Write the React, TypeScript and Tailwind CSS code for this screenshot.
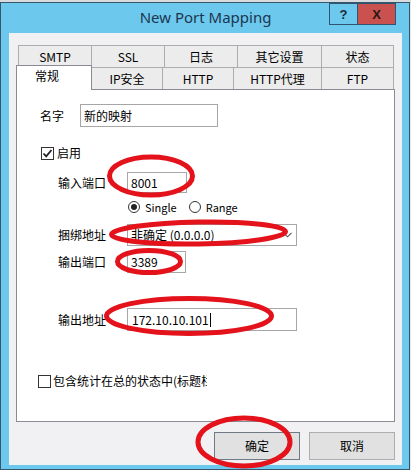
import React from "react";

const font = { fontFamily: "'Noto Sans CJK SC', 'Noto Sans', sans-serif" };

function Tab({ label, w, first }: { label: string; w: string; first?: boolean }) {
  return (
    <div
      className={`${w} h-[22px] bg-[#ececec] border-t border-r border-[#adadad] ${first ? "border-l" : ""} flex items-center justify-center text-[12px] text-black leading-none`}
    >
      {label}
    </div>
  );
}

function Check({ checked }: { checked?: boolean }) {
  return (
    <div className="w-[13px] h-[13px] border border-[#333] bg-white flex items-center justify-center shrink-0">
      {checked && (
        <svg width="11" height="11" viewBox="0 0 11 11">
          <polyline points="1.5,5.5 4.2,8.3 9.5,2" fill="none" stroke="#222" strokeWidth="1.8" />
        </svg>
      )}
    </div>
  );
}

function Radio({ checked }: { checked?: boolean }) {
  return (
    <div className="w-[12px] h-[12px] rounded-full border border-[#333] bg-white flex items-center justify-center shrink-0">
      {checked && <div className="w-[6px] h-[6px] rounded-full bg-[#222]" />}
    </div>
  );
}

export default function App() {
  return (
    <div className="relative w-[411px] h-[470px] overflow-hidden bg-[#e6e8ea]" style={font}>
      <div className="h-[2px] bg-[#d8dcdf]" />
      <div className="w-[410px] h-[468px] border border-[#35566c] bg-[#6cc8ec] flex flex-col pl-[8px] pr-[7px] pb-[4px]">
        {/* title bar */}
        <div className="h-[30px] grid grid-cols-[1fr_auto_1fr]">
          <div />
          <div
            className="self-center text-[15px] text-[#1d3652] leading-none pb-[1px]"
            style={{ fontFamily: "'Noto Sans', sans-serif" }}
          >
            New Port Mapping
          </div>
          <div className="flex justify-end items-start pr-[6px]">
            <div className="w-[29px] h-[22px] border border-[#2e5670] flex items-center justify-center text-[13px] font-bold text-[#1a2a3a] leading-none" style={{ fontFamily: "'Liberation Sans', sans-serif" }}>
              ?
            </div>
            <div className="w-[38px] h-[22px] border-t border-r border-b border-[#2e5670] bg-[#c9524f] flex items-center justify-center text-[13px] font-bold text-[#2a1616] leading-none" style={{ fontFamily: "'Liberation Sans', sans-serif" }}>
              X
            </div>
          </div>
        </div>

        {/* client area */}
        <div className="flex-1 bg-[#f1f0f3] flex flex-col pt-[12px] pl-[7px] pr-[7px]">
          {/* tabs */}
          <div className="flex flex-col">
            <div className="flex pl-[2px] h-[22px]">
              <Tab label="SMTP" w="w-[74px]" first />
              <Tab label="SSL" w="w-[73px]" />
              <Tab label="日志" w="w-[73px]" />
              <Tab label="其它设置" w="w-[84px]" />
              <Tab label="状态" w="w-[72px]" />
            </div>
            <div className="flex h-[22px] items-start">
              <div className="relative z-10 -mt-[2px] w-[76px] h-[25px] bg-white border-t border-l border-r border-[#898c95] flex items-start pl-[18px] pt-[3px] text-[12px] text-black leading-[14px]">
                常规
              </div>
              <Tab label="IP安全" w="w-[71px]" />
              <Tab label="HTTP" w="w-[71px]" />
              <Tab label="HTTP代理" w="w-[88px]" />
              <Tab label="FTP" w="w-[72px]" />
            </div>
          </div>

          {/* panel */}
          <div className="w-[379px] h-[333px] border border-[#898c95] bg-white flex flex-col text-[12px] text-black">
            {/* name */}
            <div className="flex items-center mt-[14px] pl-[23px] h-[23px]">
              <div className="w-[40px]">名字</div>
              <div className="w-[138px] h-[23px] border border-[#a6a6a6] flex items-center pl-[3px]">新的映射</div>
            </div>
            {/* enabled */}
            <div className="flex items-center mt-[19px] pl-[24px] h-[14px] gap-[3px]">
              <Check checked />
              <span>启用</span>
            </div>
            {/* input port */}
            <div className="flex items-center mt-[12px] pl-[41px] h-[21px]">
              <div className="w-[69px]">输入端口</div>
              <div className="w-[60px] h-[21px] border border-[#a6a6a6] flex items-center pl-[3px]">8001</div>
            </div>
            {/* radios */}
            <div className="flex items-center mt-[7px] pl-[111px] h-[14px] text-[11px]">
              <div className="flex items-center gap-[5px]">
                <Radio checked />
                <span>Single</span>
              </div>
              <div className="flex items-center gap-[5px] ml-[12px]">
                <Radio />
                <span>Range</span>
              </div>
            </div>
            {/* bind address */}
            <div className="flex items-center mt-[10px] pl-[41px] h-[22px]">
              <div className="w-[69px]">捆绑地址</div>
              <div className="w-[170px] h-[22px] border border-[#a6a6a6] flex items-center pl-[3px] pr-[4px]">
                <span className="flex-1">非确定 (0.0.0.0)</span>
                <svg width="9" height="6" viewBox="0 0 9 6">
                  <polyline points="0.5,0.8 4.5,4.8 8.5,0.8" fill="none" stroke="#555" strokeWidth="1.1" />
                </svg>
              </div>
            </div>
            {/* output port */}
            <div className="flex items-center mt-[5px] pl-[41px] h-[22px]">
              <div className="w-[69px]">输出端口</div>
              <div className="w-[59px] h-[22px] border border-[#a6a6a6] flex items-center pl-[3px]">3389</div>
            </div>
            {/* output address */}
            <div className="flex items-center mt-[35px] pl-[41px] h-[23px]">
              <div className="w-[69px]">输出地址</div>
              <div className="w-[170px] h-[23px] border border-[#a6a6a6] flex items-center pl-[4px]">
                <span>172.10.10.101</span>
                <span className="w-[1px] h-[14px] bg-black ml-[1px]" />
              </div>
            </div>
            {/* stats checkbox */}
            <div className="flex items-center mt-[43px] pl-[21px] h-[14px] gap-[2px]">
              <Check />
              <span className="w-[154px] overflow-hidden whitespace-nowrap">包含统计在总的状态中(标题栏</span>
            </div>
          </div>

          {/* buttons */}
          <div className="flex justify-end gap-[9px] mt-[10px] w-[379px]">
            <div className="w-[86px] h-[28px] bg-[#e1e1e1] border border-[#707a84] flex items-center justify-center text-[12px] text-black">确定</div>
            <div className="w-[86px] h-[28px] bg-[#e1e1e1] border border-[#adadad] flex items-center justify-center text-[12px] text-black">取消</div>
          </div>
        </div>
      </div>

      {/* red annotation ellipses */}
      <svg className="absolute inset-0 pointer-events-none" width="411" height="470" viewBox="0 0 411 470">
        <g fill="none" stroke="#e3121b" strokeWidth="5">
          <ellipse cx="151" cy="176" rx="41.5" ry="19" />
          <ellipse cx="198.5" cy="233" rx="87" ry="11" transform="rotate(-1 198.5 233)" />
          <ellipse cx="149" cy="261.5" rx="31.5" ry="11" />
          <ellipse cx="189" cy="316" rx="82.5" ry="17.5" />
          <ellipse cx="244" cy="442" rx="46" ry="24" />
        </g>
      </svg>
    </div>
  );
}
